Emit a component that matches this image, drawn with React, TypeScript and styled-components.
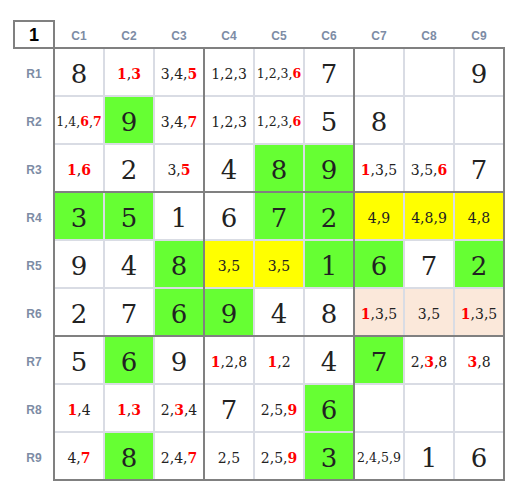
import React from "react";
import styled, { createGlobalStyle } from "styled-components";

const GlobalStyle = createGlobalStyle`
  html, body { margin: 0; padding: 0; background: #ffffff; }
  body { font-family: "Liberation Sans", Arial, sans-serif; }
`;

const Page = styled.div`
  padding: 20px 0 0 13px;
  display: grid;
  grid-template-columns: 40px 452px;
  grid-template-rows: 27px 434px;
`;

const Corner = styled.div`
  width: 42px;
  height: 29px;
  box-sizing: border-box;
  border: 2px solid #808080;
  display: flex;
  align-items: center;
  justify-content: center;
  font: bold 18px "Liberation Sans", Arial, sans-serif;
  color: #000;
  padding-top: 1px;
`;

const ColHeaders = styled.div`
  display: grid;
  grid-template-columns: repeat(9, 48px);
  column-gap: 2px;
  padding-left: 2px;
  align-items: center;
`;

const HeaderLabel = styled.div`
  font: bold 12px "Liberation Sans", Arial, sans-serif;
  color: #7d8ca5;
  text-align: center;
  padding-top: 4px;
`;

const RowHeaders = styled.div`
  display: grid;
  grid-template-rows: repeat(9, 46px);
  row-gap: 2px;
  padding-top: 2px;
`;

const RowLabel = styled(HeaderLabel)`
  display: flex;
  align-items: center;
  justify-content: center;
  padding-left: 2px;
`;

const Board = styled.div`
  display: grid;
  grid-template-columns: repeat(3, 148px);
  grid-template-rows: repeat(3, 142px);
  gap: 2px;
  background: #808080;
  border: 2px solid #808080;
`;

const Box = styled.div`
  display: grid;
  grid-template-columns: repeat(3, 48px);
  grid-template-rows: repeat(3, 46px);
  gap: 2px;
  background: #d9dce4;
`;

const BG: Record<string, string> = {
  g: "#66ff33",
  y: "#ffff00",
  p: "#fbe8da",
  "": "#ffffff",
};

const Cell = styled.div<{ $bg: string }>`
  background: ${(p) => p.$bg};
  display: flex;
  align-items: center;
  justify-content: center;
  font-family: "DejaVu Serif", "Liberation Serif", serif;
  color: #222222;
  padding-top: 3px;
  box-sizing: border-box;
  white-space: nowrap;
`;

const Big = styled.span`
  font-size: 26px;
`;

const Cands = styled.span<{ $small: boolean }>`
  font-size: ${(p) => (p.$small ? "12.5px" : "14px")};
`;

const Red = styled.span`
  color: #ff0000;
  font-weight: bold;
`;

const data: string[][] = [
  ["8", "*1,*3", "3,4,*5", "1,2,3", "1,2,3,*6", "7", "", "", "9"],
  ["1,4,*6,*7", "9|g", "3,4,*7", "1,2,3", "1,2,3,*6", "5", "8", "", ""],
  ["*1,*6", "2", "3,*5", "4", "8|g", "9|g", "*1,3,5", "3,5,*6", "7"],
  ["3|g", "5|g", "1", "6", "7|g", "2|g", "4,9|y", "4,8,9|y", "4,8|y"],
  ["9", "4", "8|g", "3,5|y", "3,5|y", "1|g", "6|g", "7", "2|g"],
  ["2", "7", "6|g", "9|g", "4", "8", "*1,3,5|p", "3,5|p", "*1,3,5|p"],
  ["5", "6|g", "9", "*1,2,8", "*1,2", "4", "7|g", "2,*3,8", "*3,8"],
  ["*1,4", "*1,*3", "2,*3,4", "7", "2,5,*9", "6|g", "", "", ""],
  ["4,*7", "8|g", "2,4,*7", "2,5", "2,5,*9", "3|g", "2,4,5,9", "1", "6"],
];

function CellView({ spec }: { spec: string }) {
  const [value, bg = ""] = spec.split("|");
  const parts = value ? value.split(",") : [];
  const isCandidates = parts.length > 1;
  return (
    <Cell $bg={BG[bg]}>
      {!isCandidates && value ? <Big>{value}</Big> : null}
      {isCandidates ? (
        <Cands $small={parts.length >= 4}>
          {parts.map((d, i) => (
            <React.Fragment key={i}>
              {i > 0 ? "," : ""}
              {d.startsWith("*") ? <Red>{d.slice(1)}</Red> : d}
            </React.Fragment>
          ))}
        </Cands>
      ) : null}
    </Cell>
  );
}

export default function App() {
  const boxes = [0, 1, 2, 3, 4, 5, 6, 7, 8];
  return (
    <>
      <GlobalStyle />
      <Page>
        <Corner>1</Corner>
        <ColHeaders>
          {boxes.map((i) => (
            <HeaderLabel key={i}>C{i + 1}</HeaderLabel>
          ))}
        </ColHeaders>
        <RowHeaders>
          {boxes.map((i) => (
            <RowLabel key={i}>R{i + 1}</RowLabel>
          ))}
        </RowHeaders>
        <Board>
          {boxes.map((b) => {
            const br = Math.floor(b / 3) * 3;
            const bc = (b % 3) * 3;
            return (
              <Box key={b}>
                {[0, 1, 2].flatMap((r) =>
                  [0, 1, 2].map((c) => (
                    <CellView key={`${r}-${c}`} spec={data[br + r][bc + c]} />
                  ))
                )}
              </Box>
            );
          })}
        </Board>
      </Page>
    </>
  );
}
